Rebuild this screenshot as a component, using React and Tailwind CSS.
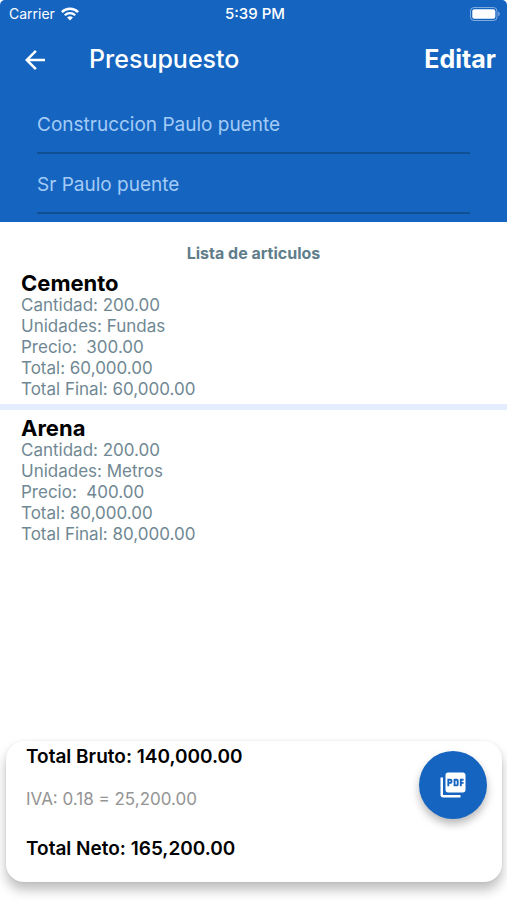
import React from "react";
import { MdArrowBack, MdPictureAsPdf } from "react-icons/md";

const articles = [
  { name: "Cemento", quantity: "200.00", unit: "Fundas", price: "300.00", total: "60,000.00", final: "60,000.00" },
  { name: "Arena", quantity: "200.00", unit: "Metros", price: "400.00", total: "80,000.00", final: "80,000.00" },
];

function WifiIcon() {
  return (
    <svg viewBox="0 0 18 14" className="h-[14px] w-[18px]" fill="none" stroke="currentColor" aria-hidden="true">
      <path d="M0.9 5.2a11.5 11.5 0 0 1 16.2 0" strokeWidth="2.5" />
      <path d="M3.8 8.2a7.4 7.4 0 0 1 10.4 0" strokeWidth="2.3" />
      <path d="M9 13.6L6.1 10.6a4.1 4.1 0 0 1 5.8 0z" fill="currentColor" stroke="none" />
    </svg>
  );
}

function BatteryIcon() {
  return (
    <svg viewBox="0 0 31 14" className="h-[14px] w-[31px]" aria-hidden="true">
      <rect x="0.5" y="0.5" width="26.5" height="13" rx="3.5" fill="none" stroke="#fff" strokeOpacity="0.45" />
      <rect x="2.3" y="2.3" width="23" height="9.4" rx="2" fill="#fff" />
      <path d="M28.3 4.8c1.9 0.6 1.9 3.8 0 4.4z" fill="#fff" fillOpacity="0.5" />
    </svg>
  );
}

function StatusBar() {
  return (
    <div className="grid h-7 grid-cols-3 items-center pr-[6px] pl-[9px] text-sm">
      <div className="flex items-center gap-[6px]">
        <span>Carrier</span>
        <WifiIcon />
      </div>
      <span className="text-center text-[15px] font-medium">5:39 PM</span>
      <div className="flex justify-end">
        <BatteryIcon />
      </div>
    </div>
  );
}

function Field({ label, value }) {
  return (
    <input
      aria-label={label}
      defaultValue={value}
      readOnly
      className="block h-[60px] w-full border-b-2 border-[#104f94] bg-transparent pt-[2px] text-[19px] text-[#a3cbf6] outline-none"
    />
  );
}

function Article({ item }) {
  return (
    <li className="border-b-[6px] border-[#e4edfd] px-[21px] pb-1 text-[17px] leading-[21px] text-[#708893] last:border-b-0">
      <h3 className="pt-[6px] text-[22px] leading-6 font-bold text-black">{item.name}</h3>
      <p>Cantidad: {item.quantity}</p>
      <p>Unidades: {item.unit}</p>
      <p className="whitespace-pre">{`Precio:  ${item.price}`}</p>
      <p>Total: {item.total}</p>
      <p>Total Final: {item.final}</p>
    </li>
  );
}

export default function App() {
  return (
    <div className="flex min-h-screen flex-col bg-white font-['Inter',sans-serif]">
      <header className="rounded-t-[5px] bg-[#1565c0] pb-2 text-white">
        <StatusBar />
        <div className="flex h-16 items-center pr-[11px] pl-5">
          <button type="button" aria-label="Volver" className="mr-[39px]">
            <MdArrowBack className="size-[30px]" />
          </button>
          <h1 className="flex-1 text-[25px] font-medium">Presupuesto</h1>
          <button type="button" className="text-[25px] font-bold">Editar</button>
        </div>
        <div className="px-[37px] pt-[2px]">
          <Field label="Proyecto" value="Construccion Paulo puente" />
          <Field label="Cliente" value="Sr Paulo puente" />
        </div>
      </header>

      <main className="flex-1 pt-[19px]">
        <h2 className="text-center text-base leading-6 font-bold text-[#607d8b]">Lista de articulos</h2>
        <ul>
          {articles.map((item) => (
            <Article key={item.name} item={item} />
          ))}
        </ul>
      </main>

      <footer className="mr-[5px] mb-[18px] ml-[6px] flex items-start justify-between rounded-[18px] bg-white pt-1 pr-[15px] pb-[21px] pl-5 shadow-[0_8px_12px_rgba(0,0,0,0.25),0_0_3px_rgba(0,0,0,0.08)]">
        <div className="text-[19px] leading-6 text-black">
          <p className="font-semibold">Total Bruto: 140,000.00</p>
          <p className="pt-[18px] text-[17px] text-[#949494]">IVA: 0.18 = 25,200.00</p>
          <p className="pt-[26px] font-semibold">Total Neto: 165,200.00</p>
        </div>
        <button
          type="button"
          aria-label="Exportar PDF"
          className="mt-[6px] flex size-[68px] items-center justify-center rounded-full bg-[#1565c0] text-white shadow-[0_5px_9px_rgba(0,0,0,0.28)]"
        >
          <MdPictureAsPdf className="size-[30px]" />
        </button>
      </footer>
    </div>
  );
}
